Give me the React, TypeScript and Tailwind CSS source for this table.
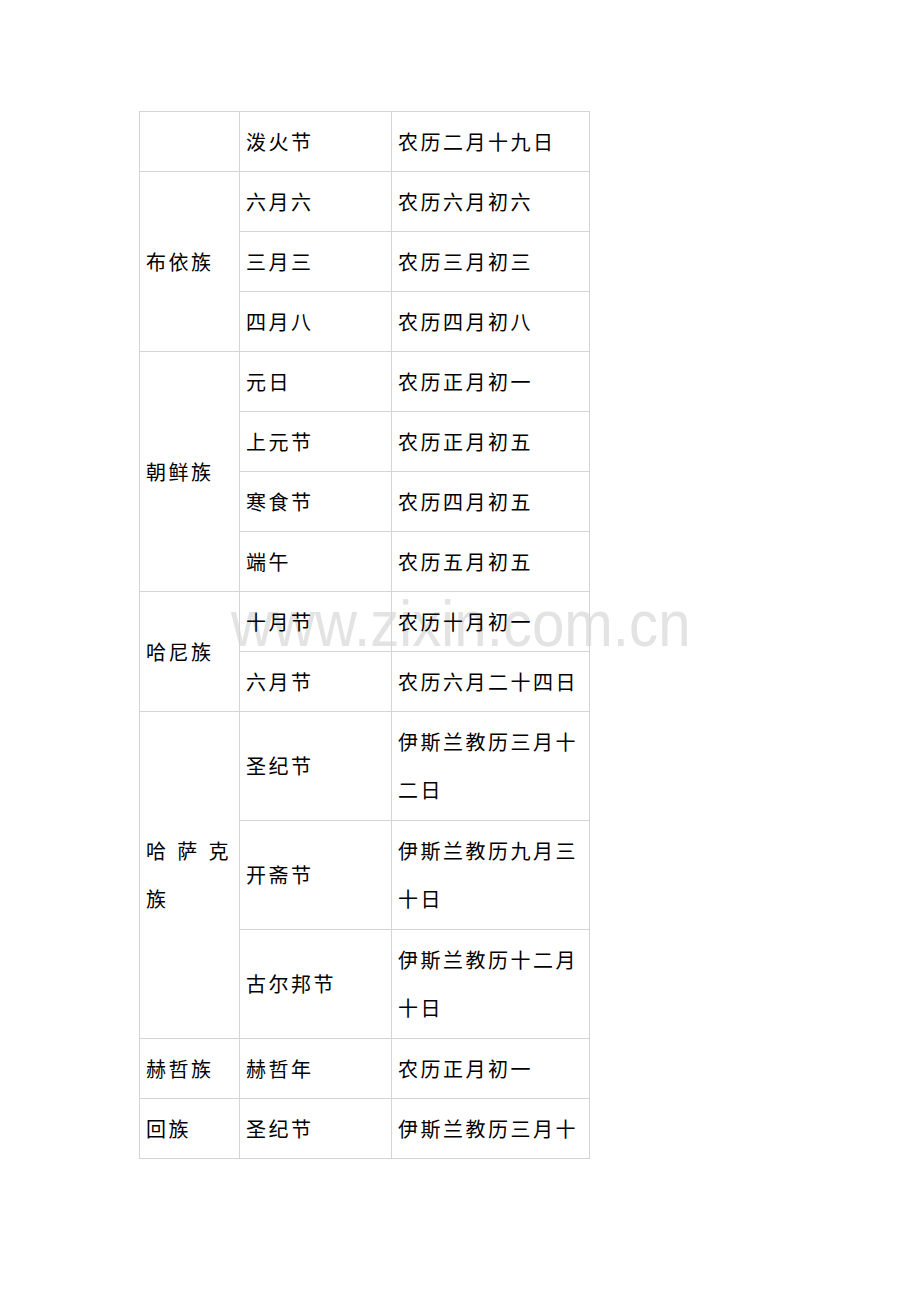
const font = '"Noto Sans CJK SC", "Noto Sans", sans-serif';

type Row = { group?: { label: React.ReactNode; span: number }; name: string; date: string };

const rows: Row[] = [
  { group: { label: "", span: 1 }, name: "泼火节", date: "农历二月十九日" },
  { group: { label: "布依族", span: 3 }, name: "六月六", date: "农历六月初六" },
  { name: "三月三", date: "农历三月初三" },
  { name: "四月八", date: "农历四月初八" },
  { group: { label: "朝鲜族", span: 4 }, name: "元日", date: "农历正月初一" },
  { name: "上元节", date: "农历正月初五" },
  { name: "寒食节", date: "农历四月初五" },
  { name: "端午", date: "农历五月初五" },
  { group: { label: "哈尼族", span: 2 }, name: "十月节", date: "农历十月初一" },
  { name: "六月节", date: "农历六月二十四日" },
  {
    group: {
      label: (
        <>
          <span className="flex justify-between pr-[2px]">
            <span>哈</span>
            <span>萨</span>
            <span>克</span>
          </span>
          <span className="block">族</span>
        </>
      ),
      span: 3,
    },
    name: "圣纪节",
    date: "伊斯兰教历三月十二日",
  },
  { name: "开斋节", date: "伊斯兰教历九月三十日" },
  { name: "古尔邦节", date: "伊斯兰教历十二月十日" },
  { group: { label: "赫哲族", span: 1 }, name: "赫哲年", date: "农历正月初一" },
  { group: { label: "回族", span: 1 }, name: "圣纪节", date: "伊斯兰教历三月十" },
];

const cell = "border border-[#d4d4d4] px-[6px] align-middle text-left font-normal";

export default function App() {
  return (
    <div className="relative min-h-[1302px] w-[920px] bg-white pt-[111px] pl-[139px]" style={{ fontFamily: font }}>
      {/* watermark */}
      <div
        className="pointer-events-none absolute left-[231px] top-[584px] origin-left scale-x-[0.91] select-none whitespace-nowrap text-[64px] leading-[80px] text-[#e3e3e3]"
        style={{ fontFamily: '"Liberation Sans", Arial, sans-serif' }}
      >
        www.zixin.com.cn
      </div>

      <table className="relative z-10 w-[450px] table-fixed border-collapse text-[20px] leading-[48px] tracking-[2.5px] text-black">
        <colgroup>
          <col className="w-[100px]" />
          <col className="w-[152px]" />
          <col className="w-[198px]" />
        </colgroup>
        <tbody>
          {rows.map((r, i) => {
            // wrapped rows are a touch taller in the original
            const py = r.date.length > 8 ? "py-[6px]" : "py-[5.5px]";
            return (
              <tr key={i}>
                {r.group && (
                  <td rowSpan={r.group.span} className={`${cell} py-[5.5px]`}>
                    {r.group.label}
                  </td>
                )}
                <td className={`${cell} ${py}`}>{r.name}</td>
                <td className={`${cell} ${py}`}>{r.date}</td>
              </tr>
            );
          })}
        </tbody>
      </table>
    </div>
  );
}
